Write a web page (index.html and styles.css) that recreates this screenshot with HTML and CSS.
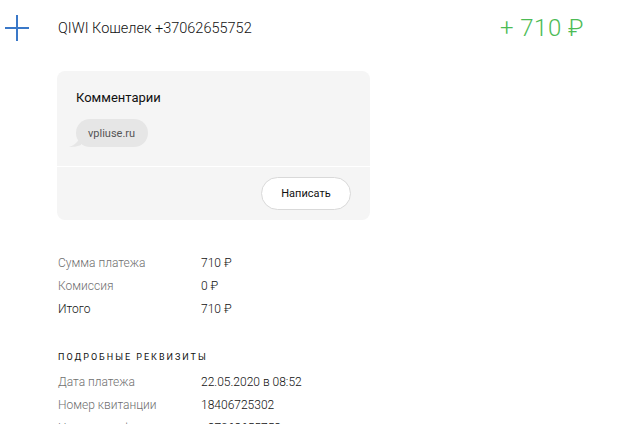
FILE: index.html
```html
<!DOCTYPE html>
<html lang="ru">
<head>
<meta charset="utf-8">
<link rel="stylesheet" href="styles.css">
</head>
<body>
<div class="page">
  <header class="head">
    <svg class="plus" width="24" height="26" viewBox="0 0 24 26"><path d="M12 0V26M0 13H24" stroke="#3a78c8" stroke-width="2" fill="none"/></svg>
    <div class="title">QIWI Кошелек +37062655752</div>
    <div class="amount">+ 710 ₽</div>
  </header>

  <section class="card">
    <div class="card-body">
      <div class="card-title">Комментарии</div>
      <div class="bubble">
        <svg class="tail" width="12" height="12" viewBox="0 0 12 12"><path d="M12 0 C10 6 6 10 0 12 C5 12 10 11 12 10 Z" fill="#e6e6e6"/></svg>
        <span>vpliuse.ru</span>
      </div>
    </div>
    <div class="card-foot">
      <button class="btn">Написать</button>
    </div>
  </section>

  <dl class="rows summary">
    <div class="row"><dt>Сумма платежа</dt><dd>710 ₽</dd></div>
    <div class="row"><dt>Комиссия</dt><dd>0 ₽</dd></div>
    <div class="row total"><dt>Итого</dt><dd>710 ₽</dd></div>
  </dl>

  <h3 class="section">Подробные реквизиты</h3>
  <dl class="rows details">
    <div class="row"><dt>Дата платежа</dt><dd>22.05.2020 в 08:52</dd></div>
    <div class="row"><dt>Номер квитанции</dt><dd>18406725302</dd></div>
    <div class="row"><dt>Номер телефона</dt><dd>+37062655752</dd></div>
  </dl>
</div>
</body>
</html>
```

FILE: styles.css
```css
* { box-sizing: border-box; }
html, body { margin: 0; padding: 0; background: #fff; }
body {
  font-family: Roboto, "Noto Sans", sans-serif;
  color: #111;
  overflow: hidden;
}
.page { width: 622px; }
.head {
  display: flex;
  align-items: center;
  height: 56px;
  padding: 0 38px 0 5px;
}
.plus { display: block; }
.title {
  margin-left: 29px;
  font-size: 14.5px;
  font-weight: 300;
  color: #111;
  flex: 1;
}
.amount {
  font-size: 24px;
  font-weight: 300;
  color: #4cbb55;
  letter-spacing: 0.5px;
}
.card {
  margin: 15px 0 0 57px;
  width: 313px;
  background: #f5f5f5;
  border-radius: 8px;
}
.card-body {
  height: 96px;
  padding: 19px 0 0 13px;
  border-bottom: 1px solid #fff;
}
.card-title {
  padding-left: 6px;
  font-size: 13px;
  font-weight: 400;
  line-height: 16px;
  color: #111;
}
.bubble {
  position: relative;
  display: inline-flex;
  align-items: center;
  margin-top: 13px;
  margin-left: 6px;
  height: 28px;
  padding: 0 13px 0 12px;
  background: #e6e6e6;
  border-radius: 14px;
  font-size: 11px;
  color: #555;
}
.tail { position: absolute; left: -7px; bottom: 0; }
.card-foot {
  display: flex;
  justify-content: flex-end;
  padding: 10px 19px 10px 0;
}
.btn {
  width: 90px;
  height: 33px;
  background: #fff;
  border: 1px solid #d9d9d9;
  border-radius: 17px;
  font-family: inherit;
  font-size: 11px;
  color: #111;
}
.rows { margin: 0; padding: 0 0 0 58px; }
.summary { margin-top: 31px; }
.row {
  display: flex;
  height: 23px;
  align-items: center;
  font-size: 12px;
  font-weight: 300;
}
.row dt { width: 143px; color: #6f6f6f; }
.row dd { margin: 0; color: #111; }
.row.total dt { color: #111; }
.section {
  margin: 32px 0 7px 58px;
  font-size: 9px;
  line-height: 11px;
  font-weight: 400;
  text-transform: uppercase;
  letter-spacing: 2px;
  color: #111;
}
```
